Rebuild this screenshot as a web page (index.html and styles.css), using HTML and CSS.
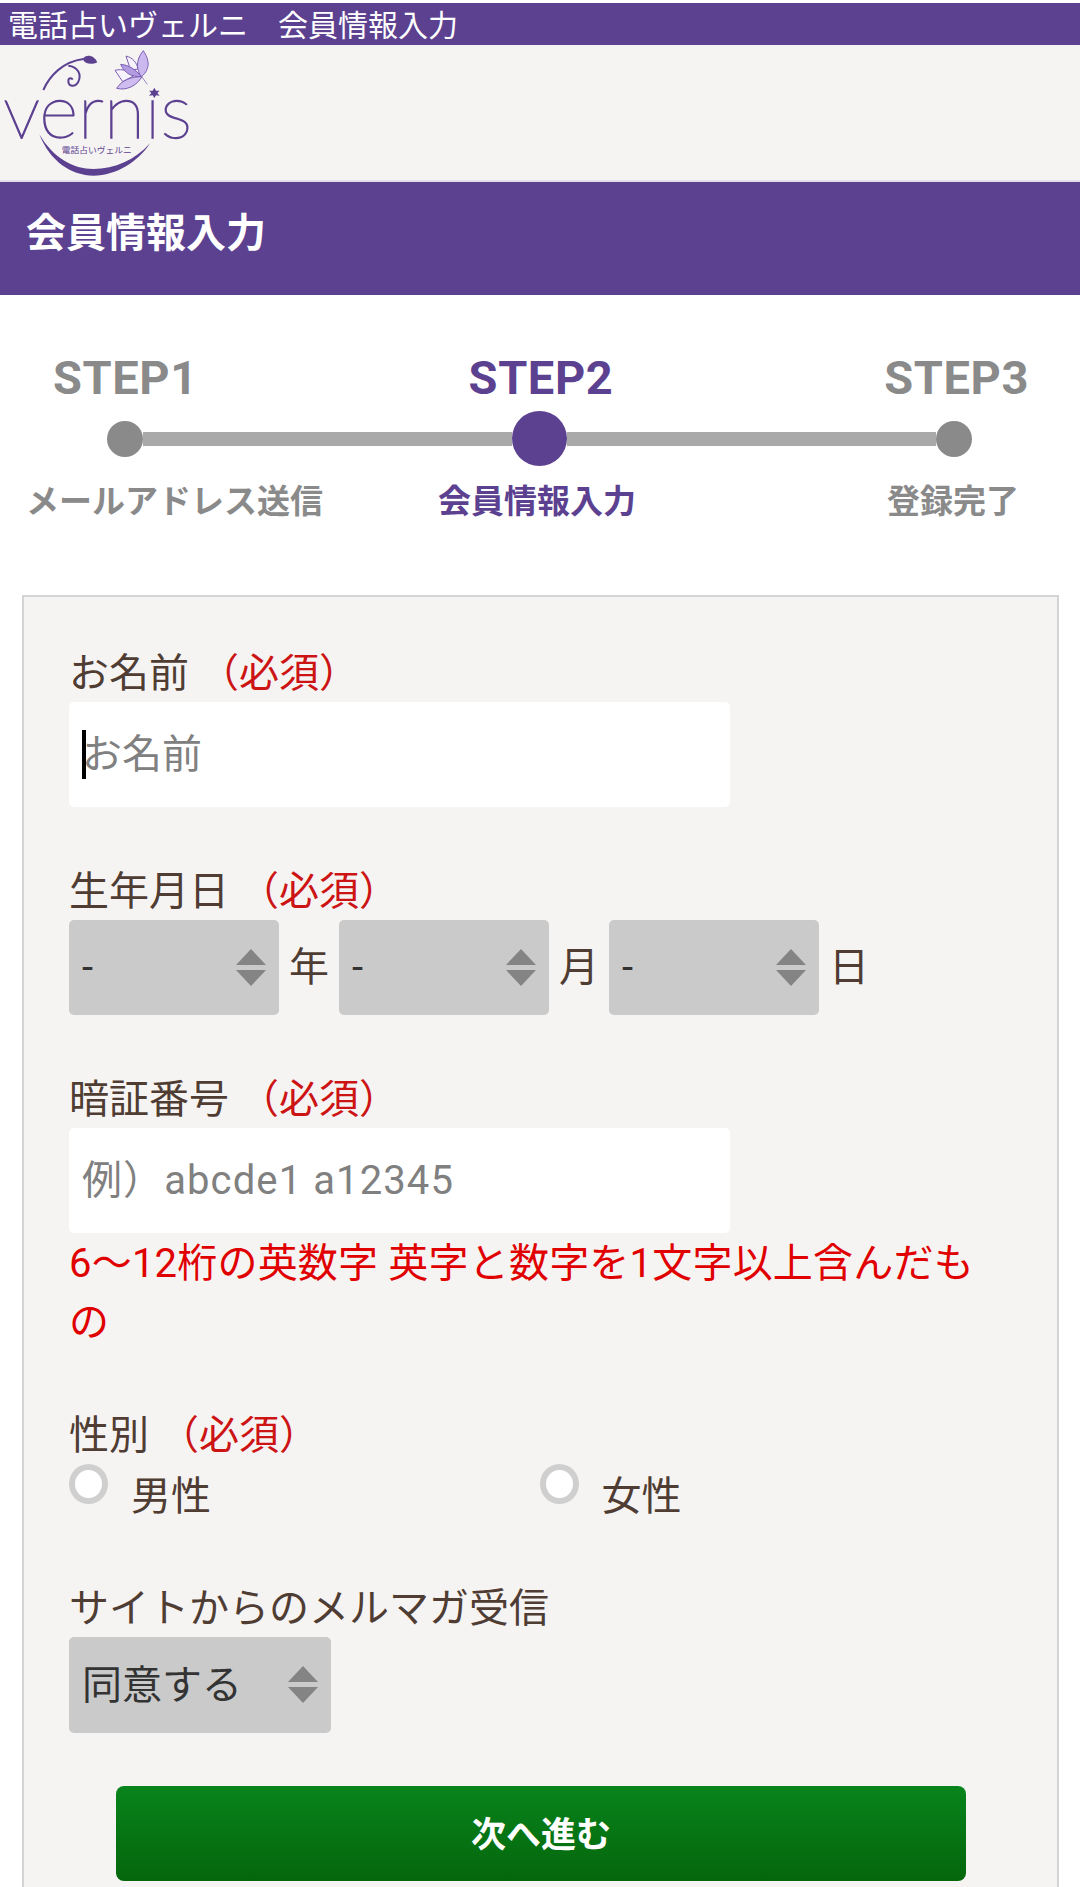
FILE: index.html
```html
<!DOCTYPE html>
<html lang="ja">
<head>
  <meta charset="UTF-8">
  <meta name="viewport" content="width=device-width, initial-scale=1.0">
  <title>電話占いヴェルニ 会員情報入力</title>
  <link rel="stylesheet" href="styles.css">
</head>
<body>
  <div class="topbar">電話占いヴェルニ　会員情報入力</div>
  <header class="site-header">
    <svg class="logo" width="200" height="135" viewBox="0 0 600 405">
      <!-- stem and swirl -->
      <path class="logo-line" d="M130 135C150 90 190 50 250 42" />
      <path class="logo-line" d="M205 62C235 65 245 90 235 110C225 128 205 125 205 108C205 98 215 98 218 104" />
      <path class="logo-fill" d="M248 42C258 28 280 28 292 52C275 60 255 58 248 42Z" />
      <path class="logo-fill" d="M118 268C150 350 215 392 280 392C350 392 415 350 450 295C405 345 345 372 280 372C220 372 160 340 118 268Z" />
      <!-- flower -->
      <path class="petal-white" d="M378 33C398 38 410 52 414 72L392 76Z" />
      <path class="petal-white" d="M345 76C368 70 388 78 402 92L368 110Z" />
      <path class="petal-big" d="M430 17C448 45 452 70 425 95C410 80 405 45 430 17Z" />
      <path class="petal-mid" d="M362 58C388 60 408 75 424 95C396 96 374 86 362 58Z" />
      <path class="petal-light" d="M350 130C365 105 395 95 426 95C410 122 380 138 350 130Z" />
      <path class="logo-line-thin" d="M425 95L442 118" />
      <text class="logo-name" x="10" y="280" textLength="566" lengthAdjust="spacingAndGlyphs">vernis</text>
      <circle class="logo-gap" cx="463" cy="125" r="16" />
      <path class="logo-fill" d="M463 128L468 137L479 137L472 144L479 152L468 151L463 159L458 151L447 152L454 144L447 137L458 137Z" />
      <text class="logo-sub" x="185" y="323" textLength="210" lengthAdjust="spacingAndGlyphs">電話占いヴェルニ</text>
    </svg>
  </header>
  <h1 class="page-title">会員情報入力</h1>

  <section class="steps">
    <div class="step-names">
      <span>STEP1</span>
      <span class="current">STEP2</span>
      <span>STEP3</span>
    </div>
    <div class="step-track">
      <i class="dot"></i>
      <i class="track-line"></i>
      <i class="dot dot-current"></i>
      <i class="track-line"></i>
      <i class="dot"></i>
    </div>
    <div class="step-labels">
      <span>メールアドレス送信</span>
      <span class="current">会員情報入力</span>
      <span class="last">登録完了</span>
    </div>
  </section>

  <form class="member-form">
    <div class="field">
      <label class="field-label">お名前<em>（必須）</em></label>
      <div class="input-wrap">
        <input class="text-input" type="text" placeholder="お名前">
        <span class="caret"></span>
      </div>
    </div>

    <div class="field">
      <label class="field-label">生年月日<em>（必須）</em></label>
      <div class="date-row">
        <div class="select-wrap"><select><option>-</option></select></div>
        <span class="unit">年</span>
        <div class="select-wrap"><select><option>-</option></select></div>
        <span class="unit">月</span>
        <div class="select-wrap"><select><option>-</option></select></div>
        <span class="unit">日</span>
      </div>
    </div>

    <div class="field">
      <label class="field-label">暗証番号<em>（必須）</em></label>
      <div class="input-wrap">
        <input class="text-input text-input-code" type="text" placeholder="例）abcde1 a12345">
      </div>
      <p class="hint">6〜12桁の英数字 英字と数字を1文字以上含んだもの</p>
    </div>

    <div class="field">
      <label class="field-label">性別<em>（必須）</em></label>
      <div class="radio-row">
        <label class="radio"><i class="radio-mark"></i><span>男性</span></label>
        <label class="radio"><i class="radio-mark"></i><span>女性</span></label>
      </div>
    </div>

    <div class="field">
      <label class="field-label">サイトからのメルマガ受信</label>
      <div class="select-wrap select-mail"><select><option>同意する</option></select></div>
    </div>

    <button class="next-btn" type="button">次へ進む</button>
  </form>
</body>
</html>
```

FILE: styles.css
```css
*{margin:0;padding:0;box-sizing:border-box;}
html,body{width:100%;height:100%;overflow:hidden;}
body{background:#fff;padding-top:3px;font-family:Roboto,"Noto Sans CJK JP",sans-serif;color:#4f3d33;}

.topbar{height:42px;background:#5c4191;color:#fff;font-size:30px;line-height:45px;padding-left:8px;white-space:nowrap;}
.site-header{height:137px;background:#f6f4f3;border-bottom:2px solid #e2deec;}
.logo{display:block;}
.logo-line{fill:none;stroke:#5c4191;stroke-width:6;}
.logo-line-thin{fill:none;stroke:#9a86c4;stroke-width:3;}
.logo-fill{fill:#5c4191;}
.logo-gap{fill:#f6f4f3;}
.petal-big{fill:#cbb8ee;stroke:#7c5fb5;stroke-width:3;}
.petal-mid{fill:#b39be2;stroke:#7c5fb5;stroke-width:3;}
.petal-light{fill:#cfbdf0;stroke:#7c5fb5;stroke-width:3;}
.petal-white{fill:#f6f2fc;stroke:#7c5fb5;stroke-width:3;}
.logo-name{font-family:Lato,"Noto Sans",sans-serif;font-weight:100;font-size:228px;fill:#5c4191;stroke:#5c4191;stroke-width:4;}
.logo-sub{font-family:"Noto Sans CJK JP",sans-serif;font-size:25px;fill:#5c4191;}

.page-title{height:113px;background:#5c4191;color:#fff;font-size:40px;font-weight:700;line-height:104px;padding-left:26px;}

.steps{height:300px;padding-top:60px;}
.step-names{display:flex;justify-content:space-between;padding:0 51px 0 53px;height:46px;font:700 47px/46px Roboto,sans-serif;letter-spacing:.6px;color:#8a8a8a;}
.step-names .current,.step-labels .current{color:#5c4191;}
.step-track{display:flex;align-items:center;height:55px;margin-top:10px;padding:0 108px 0 107px;}
.dot{flex:none;width:36px;height:36px;border-radius:50%;background:#8a8a8a;}
.dot-current{width:55px;height:55px;background:#5c4191;}
.track-line{flex:1;height:14px;background:#a9a9a9;}
.step-labels{display:grid;grid-template-columns:412px 196px 1fr;margin-top:14px;padding:0 61px 0 26px;font-size:33px;font-weight:700;line-height:44px;color:#8a8a8a;white-space:nowrap;}
.step-labels .last{justify-self:end;}

.member-form{margin:0 21px 0 22px;height:1292px;padding:45px 47px 0;background:#f6f4f3;border:2px solid #d4d4d4;border-bottom:0;}
.member-form>*{margin-left:-2px;}
.field{margin-bottom:53px;}
.field-label{display:block;height:60px;font-size:40px;line-height:64px;white-space:nowrap;}
.field-label em{font-style:normal;color:#cc1414;margin-left:10px;}

.input-wrap{position:relative;}
.text-input{display:block;width:661px;height:105px;padding:0 14px 0 13px;border:0;border-radius:5px;background:#fff;font:40px Roboto,"Noto Sans CJK JP",sans-serif;color:#333;}
.text-input::placeholder{color:#808080;opacity:1;}
.text-input-code{letter-spacing:1.1px;}
.caret{position:absolute;left:13px;top:28px;width:4px;height:49px;background:#000;}
.hint{width:920px;height:118px;font-size:40px;line-height:59px;letter-spacing:.2px;color:#e00000;margin-top:1px;margin-bottom:-1px;}

.date-row{display:flex;align-items:center;}
.select-wrap{position:relative;flex:none;width:210px;height:95px;border-radius:5px;background:#cacaca;}
.select-wrap select{display:block;width:100%;height:100%;padding:0 0 0 13px;border:0;background:transparent;appearance:none;-webkit-appearance:none;font:40px Roboto,"Noto Sans CJK JP",sans-serif;color:#333;}
.select-wrap::before,.select-wrap::after{content:"";position:absolute;right:13px;width:0;height:0;border-left:15px solid transparent;border-right:15px solid transparent;}
.select-wrap::before{top:29px;border-bottom:16px solid #848484;}
.select-wrap::after{top:50px;border-top:16px solid #848484;}
.unit{flex:none;width:60px;padding-left:10px;font-size:40px;line-height:58px;}
.select-mail{width:262px;height:96px;}

.radio-row{display:flex;height:60px;}
.radio{display:flex;width:472px;}
.radio-mark{flex:none;width:39px;height:40px;border:6px solid #cfcfcf;border-radius:50%;background:#fff;}
.radio span{margin-left:23px;font-size:40px;line-height:65px;}

.next-btn{display:block;width:850px;height:95px;margin-left:45px !important;padding-bottom:5px;border:0;border-radius:8px;background:linear-gradient(#08841c,#05660c);color:#fff;font:700 35px "Noto Sans CJK JP",sans-serif;}
```
